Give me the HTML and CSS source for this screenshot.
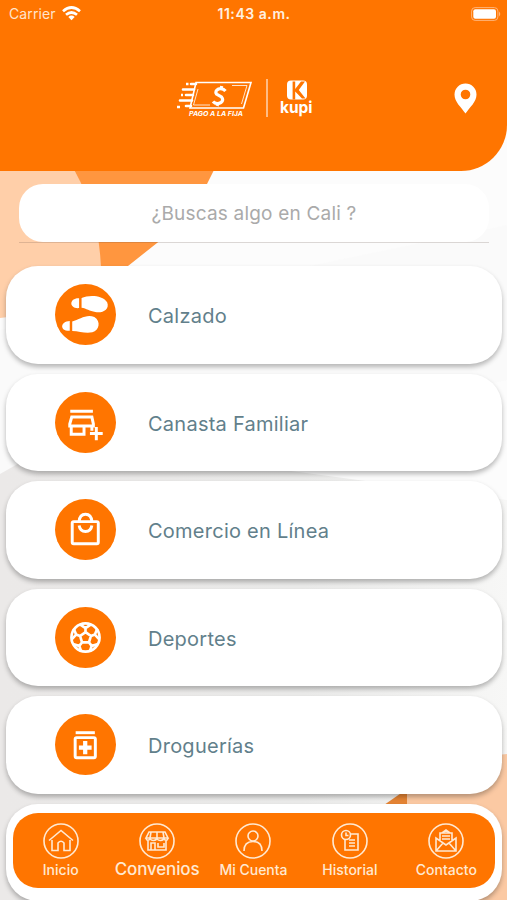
FILE: index.html
```html
<!DOCTYPE html>
<html lang="es">
<head>
<meta charset="utf-8">
<meta name="viewport" content="width=device-width, initial-scale=1">
<title>Kupi</title>
<link rel="stylesheet" href="styles.css">
</head>
<body>
<div class="app">
  <svg class="backdrop" viewBox="0 0 507 900" aria-hidden="true">
    <defs>
      <linearGradient id="shade" x1="0" y1="0" x2="1" y2="0"><stop offset="0" stop-color="#ebe9e8"/><stop offset=".6" stop-color="#ebebea"/><stop offset="1" stop-color="#f7f7f6"/></linearGradient>
    </defs>
    <path fill="#fcfcfc" d="M0 0H507V900H0Z"/>
    <path fill="#f9f9f9" d="M507 225L0 330V480L507 380Z" opacity=".7"/>
    <path fill="url(#shade)" d="M0 474L60 440L507 500V900H0Z"/>
    <path fill="#ffcfa9" d="M0 160H68Q104 215 101 266V290Q60 312 0 318Z"/>
    <path fill="#ff963f" d="M68 160H219L207 184Q185 224 157 243L128 266L101 290Q104 215 68 160Z"/>
    <path fill="#e58434" d="M384 805L407 789V805Z"/>
    <path fill="#fbc9a3" d="M407 780Q455 758 507 754V900H407Z"/>
  </svg>

  <header class="header">
    <div class="status">
      <div class="carrier"><span>Carrier</span>
        <svg width="19" height="15" viewBox="0 0 19 15" fill="none" stroke="#fff" stroke-width="2.7"><path d="M1 5.2Q9.500-2.200 18 5.200"/><path d="M4 8.800Q9.500 4.200 15 8.800"/><path fill="#fff" stroke="none" d="M6.300 11Q9.500 8.200 12.700 11L9.500 14.300Z"/></svg>
      </div>
      <div class="time">11:43 a.m.</div>
      <svg class="battery" width="30" height="14" viewBox="0 0 30 14"><rect x=".6" y=".6" width="26.300" height="12.800" rx="3.500" fill="none" stroke="#ffb478" stroke-width="1"/><rect x="2.300" y="2.300" width="22.700" height="9.400" rx="2" fill="#fff"/><path fill="#ffb478" d="M28 4.500Q30.500 7 28 9.500Z"/></svg>
    </div>
    <div class="brand">
      <svg class="logo" width="144" height="48" viewBox="0 0 144 48">
        <g fill="none" stroke="#fff">
          <path stroke-width="1.600" d="M20 3.500H75L67.500 29H14Z"/>
          <path stroke-width=".8" d="M56 6.500H71L65.500 25M34 26H17.500L22 10"/>
          <path stroke-width="2.600" d="M15 5H20M7 10.500H18M10 16H17M4 21.500H16M10 27H15" stroke-linecap="round"/>
          <path stroke-width="2.600" d="M10 5H12.500M5 16H7M1 28H4"/>
          <path stroke-width="3.200" d="M49.500 12Q46.500 8.500 42.500 10Q38.500 12 40.500 15L45.500 18Q48 21 45 23.500Q40 26 37 22.500M45.700 7L45 10M42 24L41.200 27"/>
          <path stroke="#ffd5b0" stroke-width="1.500" d="M91 0V38"/>
        </g>
        <text class="tagline" x="13" y="36.800" textLength="54" lengthAdjust="spacingAndGlyphs">PAGO A LA FIJA</text>
        <rect x="111" y="1.500" width="20" height="19" rx="4" fill="#fff"/>
        <path fill="#ff7500" d="M116.600 2.500H119.200V10L125 2.500H129L122.800 11L129.500 19.500H126L119.200 12.500V20.500H116.600Z"/>
        <text class="wordmark" x="104" y="33.700" textLength="32.500" lengthAdjust="spacingAndGlyphs">kupi</text>
      </svg>
      <svg class="pin" width="23" height="31" viewBox="0 0 23 31"><path fill="#fff" fill-rule="evenodd" d="M11.500.5A11 11 0 0 0 .5 11.500C.5 19 7 24 11.500 30.500C16 24 22.500 19 22.500 11.500A11 11 0 0 0 11.500.5ZM11.500 6.700A4.800 4.800 0 1 1 11.500 16.300A4.800 4.800 0 0 1 11.500 6.700Z"/></svg>
    </div>
  </header>

  <main>
    <div class="search"><div class="field">¿Buscas algo en Cali ?</div></div>
    <ul class="list">
      <li class="card"><svg class="badge" viewBox="0 0 62 62"><circle cx="31" cy="31" r="31"/><g fill="#fff"><path d="M27 14.300C34 11 48 11 53 18.500C56 26 48 30 41 28.500C35 27.500 32 25 27 24.200ZM24.500 14.500V24.500C14 25.500 14 14 24.500 14.500ZM17.500 38C25 36 32 30 40 33.500C47 38 45 47 38 49C31 50.500 25 48 17.500 47.700ZM15 37.500V47.500C4.500 48 5 38 15 37.500Z"/></g></svg><span>Calzado</span></li>
      <li class="card"><svg class="badge" viewBox="0 0 62 62"><circle cx="31" cy="31" r="31"/><g fill="none" stroke="#fff" stroke-width="3"><path d="M15.500 19.500H38.500M17 25.500H37.500L39 32.500V34.500H15V32.500ZM16.500 34.500V43H29.500V34.500M37.500 34.500V39.500M42 35.500V49M35.500 42.200H48.500"/></g></svg><span>Canasta Familiar</span></li>
      <li class="card"><svg class="badge" viewBox="0 0 62 62"><circle cx="31" cy="31" r="31"/><g fill="none" stroke="#fff" stroke-width="3"><rect x="17.500" y="23" width="26.500" height="22.500" rx="1.500"/><path d="M24.500 23Q25 15.500 31 15.500Q37 15.500 37.500 23M24.500 27Q25.500 33 31 33Q36.500 33 37.500 27"/></g></svg><span>Comercio en Línea</span></li>
      <li class="card"><svg class="badge" viewBox="0 0 62 62"><circle cx="31" cy="31" r="31"/><g fill="none" stroke="#fff" stroke-width="2.700"><circle cx="31" cy="31" r="14.300"/><path d="M31 25.500L36.500 29.500L34.500 36H27.500L25.500 29.500ZM31 25.500V21.500M25 17.500L31 21.500L37 17.500M36.500 29.500L40.500 28M43 22L40.500 28L45 33M34.500 36L37.300 39.500M43 38L37.300 39.500L35.500 45M27.500 36L24.700 39.500M26.500 45L24.700 39.500L19 38M25.500 29.500L21.500 28M17 33L21.500 28L19 22"/></g></svg><span>Deportes</span></li>
      <li class="card"><svg class="badge" viewBox="0 0 62 62"><circle cx="31" cy="31" r="31"/><g fill="none" stroke="#fff" stroke-width="3"><path d="M21 19H40.500"/><rect x="20.500" y="24" width="20.500" height="20.500" rx="1.500"/><path stroke-width="4.300" d="M30.700 27.500V41M24.300 34.200H37.200"/></g></svg><span>Droguerías</span></li>
      <li class="card"></li>
    </ul>
  </main>

  <nav class="tabs">
    <a class="tab"><svg viewBox="0 0 36 36"><circle cx="18" cy="18" r="17"/><path d="M6 17.500L18 7.500L30 17.500M9 17V27.500H15V20Q18 16.500 21 20V27.500H27V17"/></svg><span>Inicio</span></a>
    <a class="tab active"><svg viewBox="0 0 36 36"><circle cx="18" cy="18" r="17"/><path d="M10 9H26L29 15H7ZM7 15Q8 19 11 16Q14 19 18 16Q21 19 25 16Q28 19 29 15M9 18V27H27V18M12 27V20H16V27M19 20V24H25V20M12 9L11 15M18 9V15M24 9L25 15"/></svg><span>Convenios</span></a>
    <a class="tab"><svg viewBox="0 0 36 36"><circle cx="18" cy="18" r="17"/><circle cx="18" cy="13" r="5"/><path d="M9 28Q9 18.500 18 18.500Q27 18.500 27 28"/></svg><span>Mi Cuenta</span></a>
    <a class="tab"><svg viewBox="0 0 36 36"><circle cx="18" cy="18" r="17"/><circle cx="14" cy="12" r="4.500"/><path d="M14 9.500V12.500H16.500M19 11H26V27H13V17M17 17H23M17 20H23M17 23H23"/></svg><span>Historial</span></a>
    <a class="tab"><svg viewBox="0 0 36 36"><circle cx="18" cy="18" r="17"/><path d="M8 15V28H28V15L18 22ZM8 28L15 20M28 28L21 20M12 18V10H24V18M14 10L18 7L22 10M14 13H22M14 16H22"/></svg><span>Contacto</span></a>
  </nav>
</div>
</body>
</html>
```
FILE: styles.css
```css
* { box-sizing: border-box; }
body { margin: 0; font-family: Inter, "Liberation Sans", sans-serif; background: #fff; }
.app { position: relative; height: 900px; overflow: hidden; }
.backdrop { position: absolute; inset: 0; width: 100%; height: 100%; }
.header { position: relative; height: 171px; background: #ff7500; border-bottom-right-radius: 46px; color: #fff; }
.status { display: grid; grid-template-columns: 1fr auto 1fr; align-items: center; height: 27px; padding: 0 6px 0 9px; }
.carrier { display: flex; align-items: center; gap: 6px; font-size: 14px; letter-spacing: .1px; color: #ffe4cd; }
.time { font-size: 14px; font-weight: 600; letter-spacing: .55px; color: #fff0e0; margin-right: 2px; }
.battery { justify-self: end; }
.brand { display: flex; align-items: flex-start; justify-content: space-between; padding: 52px 30px 0 176px; }
.logo { overflow: visible; }
.pin { margin-top: 4px; }
.tagline { font-size: 6.500px; font-weight: 700; font-style: italic; fill: #fff; }
.wordmark { font-size: 16.500px; font-weight: 700; fill: #fff; }
main { position: relative; }
.search { margin: 13px 18px 0 19px; border-bottom: 1px solid rgba(90, 70, 60, .2); }
.field { height: 58px; border-radius: 24px; background: #fff; display: flex; align-items: center; justify-content: center; font-size: 19px; letter-spacing: .2px; color: #aaa; padding-top: 1px; }
.list { list-style: none; margin: 23px 5px 0 6px; padding: 0; display: grid; gap: 10px; }
.card { height: 97.500px; border-radius: 32px; background: #fff; box-shadow: 0 3px 5px rgba(0, 0, 0, .28); display: flex; align-items: center; gap: 32.500px; padding: 3px 0 0 48.500px; font-size: 20px; letter-spacing: .25px; color: #627f8b; }
.badge { width: 61px; height: 61px; fill: #ff7500; margin-bottom: 3px; }
.tabs { position: absolute; left: 13px; right: 12px; bottom: 12px; height: 75px; border-radius: 25px; background: #ff7500; display: grid; grid-template-columns: repeat(5, 1fr); color: #ffe9d2; font-size: 14px; font-weight: 500; }
.tab { display: flex; flex-direction: column; align-items: center; padding: 10px 1px 0 0; white-space: nowrap; gap: 2px; line-height: 17px; }
.tab svg { width: 36px; height: 36px; fill: none; stroke: #ffe9d2; stroke-width: 1.600; }
.active { font-size: 17px; letter-spacing: -.15px; }
```
